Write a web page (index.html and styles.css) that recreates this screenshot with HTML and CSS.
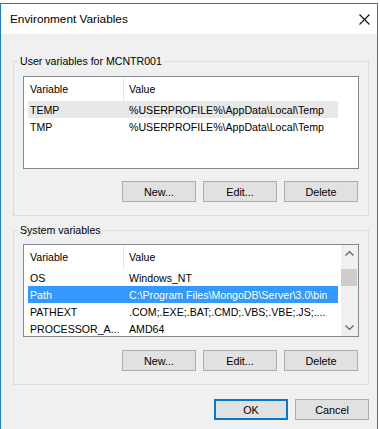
FILE: index.html
```html
<!DOCTYPE html>
<html>
<head>
<meta charset="utf-8">
<link rel="stylesheet" href="styles.css">
</head>
<body>
<div class="window">
  <div class="titlebar">
    <span class="title">Environment Variables</span>
    <svg class="close" width="11" height="11" viewBox="0 0 11 11"><path d="M0.5 0.5L10.5 10.5M10.5 0.5L0.5 10.5" stroke="#111" stroke-width="1.1" fill="none"/></svg>
  </div>
  <div class="client">
    <fieldset class="group first">
      <legend>User variables for MCNTR001</legend>
      <div class="list">
        <div class="list-body">
          <div class="head"><span class="hc1">Variable</span><span class="hc2">Value</span></div>
          <div class="row soft"><span class="c1">TEMP</span><span class="c2">%USERPROFILE%\AppData\Local\Temp</span></div>
          <div class="row"><span class="c1">TMP</span><span class="c2">%USERPROFILE%\AppData\Local\Temp</span></div>
        </div>
      </div>
      <div class="buttons first-buttons">
        <div class="btn">New...</div>
        <div class="btn">Edit...</div>
        <div class="btn">Delete</div>
      </div>
    </fieldset>
    <fieldset class="group second">
      <legend>System variables</legend>
      <div class="list">
        <div class="list-body">
          <div class="head"><span class="hc1">Variable</span><span class="hc2">Value</span></div>
          <div class="row"><span class="c1">OS</span><span class="c2">Windows_NT</span></div>
          <div class="row selected"><span class="c1">Path</span><span class="c2">C:\Program Files\MongoDB\Server\3.0\bin</span></div>
          <div class="row"><span class="c1">PATHEXT</span><span class="c2">.COM;.EXE;.BAT;.CMD;.VBS;.VBE;.JS;....</span></div>
          <div class="row"><span class="c1">PROCESSOR_A...</span><span class="c2">AMD64</span></div>
        </div>
        <div class="scrollbar">
          <div class="arrow"><svg width="17" height="17" viewBox="0 0 17 17"><path d="M4.5 10.5L8.5 6.5L12.5 10.5" stroke="#606060" stroke-width="1.2" fill="none"/></svg></div>
          <div class="thumb"></div>
          <div class="arrow down"><svg width="17" height="17" viewBox="0 0 17 17"><path d="M4.5 6.5L8.5 10.5L12.5 6.5" stroke="#606060" stroke-width="1.2" fill="none"/></svg></div>
        </div>
      </div>
      <div class="buttons second-buttons">
        <div class="btn">New...</div>
        <div class="btn">Edit...</div>
        <div class="btn">Delete</div>
      </div>
    </fieldset>
    <div class="footer">
      <div class="btn default">OK</div>
      <div class="btn">Cancel</div>
    </div>
  </div>
</div>
</body>
</html>
```

FILE: styles.css
```css
* {
  box-sizing: border-box;
}

html, body {
  margin: 0;
  background: #ffffff;
}

body {
  padding-top: 3px;
  font-family: "Liberation Sans", Arial, sans-serif;
  font-size: 10.6px;
  color: #000;
}

.window {
  width: 378px;
  height: 426px;
  border: 1px solid #1b7fd1;
  border-bottom: none;
  background: #f0f0f0;
}

.titlebar {
  height: 30px;
  background: #ffffff;
  display: flex;
  align-items: center;
  justify-content: space-between;
  padding: 0 7px 0 9px;
}

.title {
  font-size: 11.8px;
  color: #000;
}

.close {
  display: block;
}

.client {
  padding: 0 8px 0 12px;
}

.group {
  margin: 0;
  width: 356px;
  border: 1px solid #dcdcdc;
  padding: 7px 9px 13px;
  min-width: 0;
}

.group.first {
  margin-top: 19px;
}

.group.second {
  margin-top: 6px;
  padding-top: 6px;
}

legend {
  padding: 0 2px;
  margin-left: -5px;
  line-height: 16px;
}

.list {
  height: 93px;
  border: 1px solid #828790;
  background: #ffffff;
  display: flex;
  overflow: hidden;
}

.list-body {
  flex: 1;
  min-width: 0;
}

.head {
  height: 24px;
  display: flex;
  align-items: center;
}

.hc1 {
  width: 100px;
  height: 24px;
  line-height: 24px;
  padding-left: 6px;
  border-right: 1px solid #e5e5e5;
}

.hc2 {
  padding-left: 5px;
}

.row {
  height: 17px;
  margin-left: 4px;
  width: 310px;
  display: flex;
  align-items: center;
  white-space: nowrap;
}

.c1 {
  width: 96px;
  padding-left: 2px;
  flex: none;
}

.c2 {
  padding-left: 5px;
  overflow: hidden;
}

.row.soft {
  background: #e8e8e8;
}

.row.selected {
  background: #3399ff;
  color: #ffffff;
}

.scrollbar {
  width: 17px;
  flex: none;
  background: #f0f0f0;
  display: flex;
  flex-direction: column;
}

.arrow {
  height: 17px;
}

.arrow svg {
  display: block;
}

.arrow.down {
  margin-top: auto;
}

.thumb {
  margin: 7px 1px 0 0;
  height: 17px;
  background: #cdcdcd;
}

.buttons {
  display: flex;
  justify-content: flex-end;
  gap: 7px;
  padding-right: 1px;
}

.first-buttons {
  margin-top: 12px;
}

.second-buttons {
  margin-top: 13px;
}

.btn {
  width: 74px;
  height: 21px;
  background: #e1e1e1;
  border: 1px solid #adadad;
  display: flex;
  align-items: center;
  justify-content: center;
  font-size: 10.8px;
}

.btn.default {
  border-color: #0078d7;
  box-shadow: inset 0 0 0 1px #0078d7;
}

.footer {
  margin-top: 14px;
  display: flex;
  justify-content: flex-end;
  gap: 7px;
}
```
